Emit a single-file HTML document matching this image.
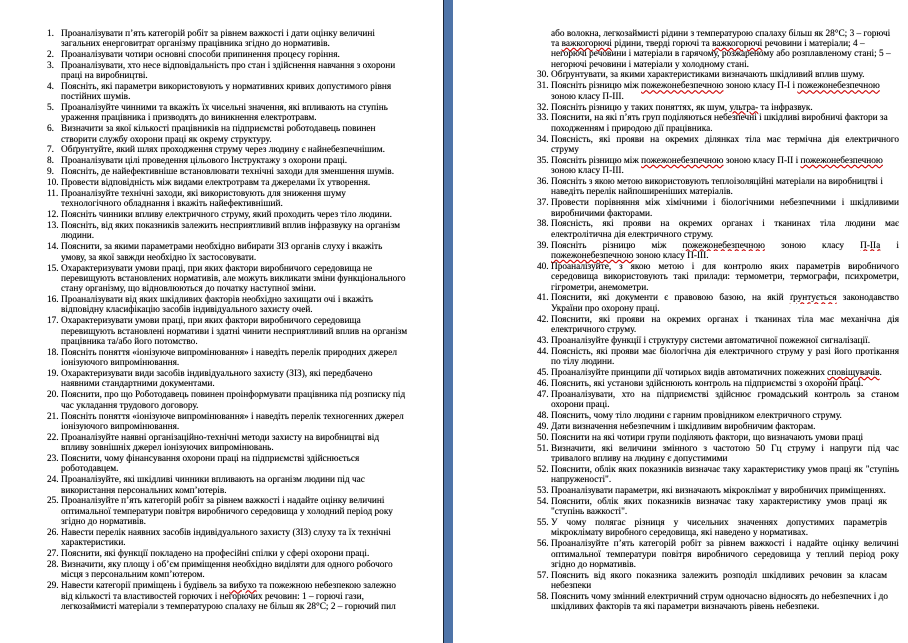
<!DOCTYPE html>
<html><head><meta charset="utf-8">
<style>
html,body{margin:0;padding:0;width:908px;height:643px;overflow:hidden;background:#fff;}
body{position:relative;font-family:"Liberation Serif","Noto Serif CJK SC",serif;font-size:9.3px;color:#000;text-shadow:0 0 0.5px rgba(0,0,0,0.6);}
.sep1{position:absolute;left:443px;top:0;width:1px;height:643px;background:#1a2233;}
.sep2{position:absolute;left:444px;top:0;width:9px;height:643px;background:#4f74a8;}
.col{position:absolute;top:28.5px;}
.l{left:61px;width:345px;}
.r{left:551px;width:348px;}
.it{position:relative;margin-bottom:0.54px;}
.n{position:absolute;left:-14px;top:0;}
.ln{height:10.35px;line-height:10.35px;white-space:nowrap;}
.j{text-align:justify;text-align-last:justify;white-space:normal;overflow:hidden;}
u{text-decoration:underline wavy #d00;text-decoration-thickness:0.5px;text-underline-offset:1px;}
</style></head><body>
<div class="sep1"></div><div class="sep2"></div>

<div class="col l">
<div class="it"><span class="n">1.</span><div class="ln">Проаналізувати пʼять категорій робіт за рівнем важкості і дати оцінку величині</div><div class="ln">загальних енерговитрат організму працівника згідно до нормативів.</div></div>
<div class="it"><span class="n">2.</span><div class="ln">Проаналізувати чотири основні способи припинення процесу горіння.</div></div>
<div class="it"><span class="n">3.</span><div class="ln">Проаналізувати, хто несе відповідальність про стан і здійснення навчання з охорони</div><div class="ln">праці на виробництві.</div></div>
<div class="it"><span class="n">4.</span><div class="ln">Поясніть, які параметри використовують у нормативних кривих допустимого рівня</div><div class="ln">постійних шумів.</div></div>
<div class="it"><span class="n">5.</span><div class="ln">Проаналізуйте чинними та вкажіть їх чисельні значення, які впливають на ступінь</div><div class="ln">ураження працівника і призводять до виникнення електротравм.</div></div>
<div class="it"><span class="n">6.</span><div class="ln">Визначити за якої кількості працівників на підприємстві роботодавець повинен</div><div class="ln">створити службу охорони праці як окрему структуру.</div></div>
<div class="it"><span class="n">7.</span><div class="ln">Обґрунтуйте, який шлях проходження струму через людину є найнебезпечнішим.</div></div>
<div class="it"><span class="n">8.</span><div class="ln">Проаналізувати цілі проведення цільового Інструктажу з охорони праці.</div></div>
<div class="it"><span class="n">9.</span><div class="ln">Поясніть, де найефективніше встановлювати технічні заходи для зменшення шумів.</div></div>
<div class="it"><span class="n">10.</span><div class="ln">Провести відповідність між видами електротравм та джерелами їх утворення.</div></div>
<div class="it"><span class="n">11.</span><div class="ln">Проаналізуйте технічні заходи, які використовують для зниження шуму</div><div class="ln">технологічного обладнання і вкажіть найефективніший.</div></div>
<div class="it"><span class="n">12.</span><div class="ln">Поясніть чинники впливу електричного струму, який проходить через тіло людини.</div></div>
<div class="it"><span class="n">13.</span><div class="ln">Поясніть, від яких показників залежить несприятливий вплив інфразвуку на організм</div><div class="ln">людини.</div></div>
<div class="it"><span class="n">14.</span><div class="ln">Пояснити, за якими параметрами необхідно вибирати ЗІЗ органів слуху і вкажіть</div><div class="ln">умову, за якої завжди необхідно їх застосовувати.</div></div>
<div class="it"><span class="n">15.</span><div class="ln">Охарактеризувати умови праці, при яких фактори виробничого середовища не</div><div class="ln">перевищують встановлених нормативів, але можуть викликати зміни функціонального</div><div class="ln">стану організму, що відновлюються до початку наступної зміни.</div></div>
<div class="it"><span class="n">16.</span><div class="ln">Проаналізувати від яких шкідливих факторів необхідно захищати очі і вкажіть</div><div class="ln">відповідну класифікацію засобів індивідуального захисту очей.</div></div>
<div class="it"><span class="n">17.</span><div class="ln">Охарактеризувати умови праці, при яких фактори виробничого середовища</div><div class="ln">перевищують встановлені нормативи і здатні чинити несприятливий вплив на організм</div><div class="ln">працівника та/або його потомство.</div></div>
<div class="it"><span class="n">18.</span><div class="ln">Поясніть поняття «іонізуюче випромінювання» і наведіть перелік природних джерел</div><div class="ln">іонізуючого випромінювання.</div></div>
<div class="it"><span class="n">19.</span><div class="ln">Охарактеризувати види засобів індивідуального захисту (ЗІЗ), які передбачено</div><div class="ln">наявними стандартними документами.</div></div>
<div class="it"><span class="n">20.</span><div class="ln">Пояснити, про що Роботодавець повинен проінформувати працівника під розписку під</div><div class="ln">час укладання трудового договору.</div></div>
<div class="it"><span class="n">21.</span><div class="ln">Поясніть поняття «іонізуюче випромінювання» і наведіть перелік техногенних джерел</div><div class="ln">іонізуючого випромінювання.</div></div>
<div class="it"><span class="n">22.</span><div class="ln">Проаналізуйте наявні організаційно-технічні методи захисту на виробництві від</div><div class="ln">впливу зовнішніх джерел іонізуючих випромінювань.</div></div>
<div class="it"><span class="n">23.</span><div class="ln">Пояснити, чому фінансування охорони праці на підприємстві здійснюється</div><div class="ln">роботодавцем.</div></div>
<div class="it"><span class="n">24.</span><div class="ln">Проаналізуйте, які шкідливі чинники впливають на організм людини під час</div><div class="ln">використання персональних компʼютерів.</div></div>
<div class="it"><span class="n">25.</span><div class="ln">Проаналізуйте пʼять категорій робіт за рівнем важкості і надайте оцінку величині</div><div class="ln">оптимальної температури повітря виробничого середовища у холодний період року</div><div class="ln">згідно до нормативів.</div></div>
<div class="it"><span class="n">26.</span><div class="ln">Навести перелік наявних засобів індивідуального захисту (ЗІЗ) слуху та їх технічні</div><div class="ln">характеристики.</div></div>
<div class="it"><span class="n">27.</span><div class="ln">Пояснити, які функції покладено на професійні спілки у сфері охорони праці.</div></div>
<div class="it"><span class="n">28.</span><div class="ln">Визначити, яку площу і обʼєм приміщення необхідно виділяти для одного робочого</div><div class="ln">місця з персональним компʼютером.</div></div>
<div class="it"><span class="n">29.</span><div class="ln">Навести категорії приміщень і будівель за <u>вибухо</u> та пожежною небезпекою залежно</div><div class="ln">від кількості та властивостей горючих і негорючих речовин: 1 – горючі гази,</div><div class="ln">легкозаймисті матеріали з температурою спалаху не більш як 28°С; 2 – горючий пил</div></div>
</div>

<div class="col r">
<div class="it"><div class="ln">або волокна, легкозаймисті рідини з температурою спалаху більш як 28°С; 3 – горючі</div><div class="ln">та <u>важкогорючі</u> рідини, тверді горючі та <u>важкогорючі</u> речовини і матеріали; 4 –</div><div class="ln">негорючі речовини і матеріали в гарячому, розжареному або розплавленому стані; 5 –</div><div class="ln">негорючі речовини і матеріали у холодному стані.</div></div>
<div class="it"><span class="n">30.</span><div class="ln">Обґрунтувати, за якими характеристиками визначають шкідливий вплив шуму.</div></div>
<div class="it"><span class="n">31.</span><div class="ln">Поясніть різницю між <u>пожежонебезпечною</u> зоною класу П-І і <u>пожежонебезпечною</u></div><div class="ln">зоною класу П-ІІІ.</div></div>
<div class="it"><span class="n">32.</span><div class="ln">Поясніть різницю у таких поняттях, як шум, <u>ультра-</u> та інфразвук.</div></div>
<div class="it"><span class="n">33.</span><div class="ln">Пояснити, на які пʼять груп поділяються небезпечні і шкідливі виробничі фактори за</div><div class="ln">походженням і природою дії працівника.</div></div>
<div class="it"><span class="n">34.</span><div class="ln j">Поясність, які прояви на окремих ділянках тіла має термічна дія електричного</div><div class="ln">струму</div></div>
<div class="it"><span class="n">35.</span><div class="ln">Поясніть різницю між <u>пожежонебезпечною</u> зоною класу П-ІІ і <u>пожежонебезпечною</u></div><div class="ln">зоною класу П-ІІІ.</div></div>
<div class="it"><span class="n">36.</span><div class="ln">Поясніть з якою метою використовують теплоізоляційні матеріали на виробництві і</div><div class="ln">наведіть перелік найпоширеніших матеріалів.</div></div>
<div class="it"><span class="n">37.</span><div class="ln j">Провести порівняння між хімічними і біологічними небезпечними і шкідливими</div><div class="ln">виробничими факторами.</div></div>
<div class="it"><span class="n">38.</span><div class="ln j">Поясність, які прояви на окремих органах і тканинах тіла людини має</div><div class="ln">електролітична дія електричного струму.</div></div>
<div class="it"><span class="n">39.</span><div class="ln j">Поясніть різницю між <u>пожежонебезпечною</u> зоною класу <u>П-ІІа</u> і</div><div class="ln"><u>пожежонебезпечною</u> зоною класу П-ІІІ.</div></div>
<div class="it"><span class="n">40.</span><div class="ln j">Проаналізуйте, з якою метою і для контролю яких параметрів виробничого</div><div class="ln j">середовища використовують такі прилади: термометри, термографи, психрометри,</div><div class="ln">гігрометри, анемометри.</div></div>
<div class="it"><span class="n">41.</span><div class="ln j">Пояснити, які документи є правовою базою, на якій <u>ґрунтується</u> законодавство</div><div class="ln">України про охорону праці.</div></div>
<div class="it"><span class="n">42.</span><div class="ln j">Пояснити, які прояви на окремих органах і тканинах тіла має механічна дія</div><div class="ln">електричного струму.</div></div>
<div class="it"><span class="n">43.</span><div class="ln">Проаналізуйте функції і структуру системи автоматичної пожежної сигналізації.</div></div>
<div class="it"><span class="n">44.</span><div class="ln j">Поясність, які прояви має біологічна дія електричного струму у разі його протікання</div><div class="ln">по тілу людини.</div></div>
<div class="it"><span class="n">45.</span><div class="ln">Проаналізуйте принципи дії чотирьох видів автоматичних пожежних <u>сповіщувачів</u>.</div></div>
<div class="it"><span class="n">46.</span><div class="ln">Пояснить, які установи здійснюють контроль на підприємстві з охорони праці.</div></div>
<div class="it"><span class="n">47.</span><div class="ln j">Проаналізувати, хто на підприємстві здійснює громадський контроль за станом</div><div class="ln">охорони праці.</div></div>
<div class="it"><span class="n">48.</span><div class="ln">Пояснить, чому тіло людини є гарним провідником електричного струму.</div></div>
<div class="it"><span class="n">49.</span><div class="ln">Дати визначення небезпечним і шкідливим виробничим факторам.</div></div>
<div class="it"><span class="n">50.</span><div class="ln">Пояснити на які чотири групи поділяють фактори, що визначають умови праці</div></div>
<div class="it"><span class="n">51.</span><div class="ln j">Визначити, які величини змінного з частотою 50 Гц струму і напруги під час</div><div class="ln">тривалого впливу на людину є допустимими</div></div>
<div class="it"><span class="n">52.</span><div class="ln j">Пояснити, облік яких показників визначає таку характеристику умов праці як "ступінь</div><div class="ln">напруженості".</div></div>
<div class="it"><span class="n">53.</span><div class="ln">Проаналізувати параметри, які визначають мікроклімат у виробничих приміщеннях.</div></div>
<div class="it"><span class="n">54.</span><div class="ln j" style="width:336px">Пояснити, облік яких показників визначає таку характеристику умов праці як</div><div class="ln">"ступінь важкості".</div></div>
<div class="it"><span class="n">55.</span><div class="ln j" style="width:336px">У чому полягає різниця у чисельних значеннях допустимих параметрів</div><div class="ln">мікроклімату виробного середовища, які наведено у нормативах.</div></div>
<div class="it"><span class="n">56.</span><div class="ln j">Проаналізуйте пʼять категорій робіт за рівнем важкості і надайте оцінку величині</div><div class="ln j">оптимальної температури повітря виробничого середовища у теплий період року</div><div class="ln">згідно до нормативів.</div></div>
<div class="it"><span class="n">57.</span><div class="ln j" style="width:336px">Пояснить від якого показника залежить розподіл шкідливих речовин за класам</div><div class="ln">небезпеки</div></div>
<div class="it"><span class="n">58.</span><div class="ln">Пояснить чому змінний електричний струм одночасно відносять до небезпечних і до</div><div class="ln">шкідливих факторів та які параметри визначають рівень небезпеки.</div></div>
</div>
</body></html>
